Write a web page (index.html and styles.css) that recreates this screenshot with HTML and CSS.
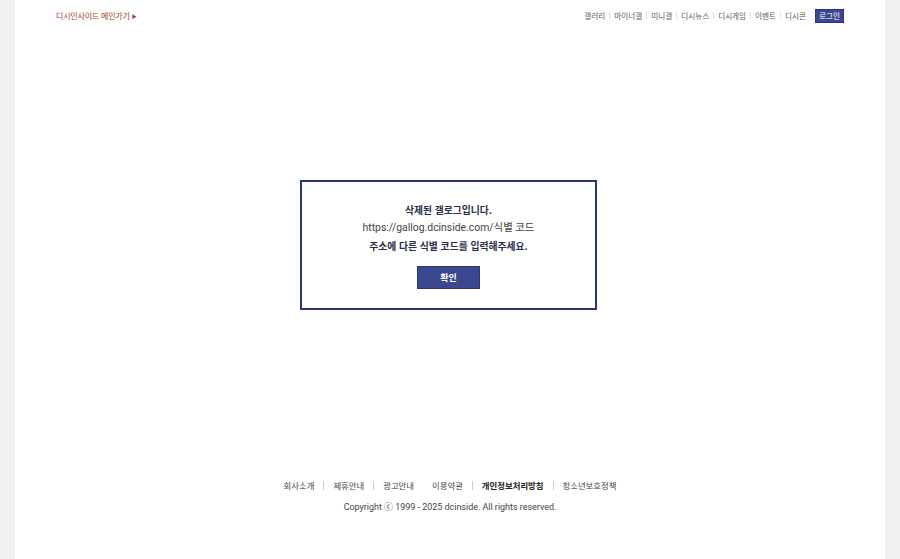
FILE: index.html
```html
<!DOCTYPE html>
<html lang="ko">
<head>
<meta charset="utf-8">
<title>갤로그</title>
<link rel="stylesheet" href="styles.css">
</head>
<body>
<div class="wrap">
  <header class="top">
    <a class="home-link" href="#">디시인사이드 메인가기 <span class="tri">&#9654;</span></a>
    <nav class="gnb">
      <a href="#">갤러리</a><span class="bar"></span>
      <a href="#">마이너갤</a><span class="bar"></span>
      <a href="#">미니갤</a><span class="bar"></span>
      <a href="#">디시뉴스</a><span class="bar"></span>
      <a href="#">디시게임</a><span class="bar"></span>
      <a href="#">이벤트</a><span class="bar"></span>
      <a href="#">디시콘</a>
      <a class="login" href="#">로그인</a>
    </nav>
  </header>
  <main class="main">
    <div class="notice">
      <p class="strong">삭제된 갤로그입니다.</p>
      <p class="url">https://gallog.dcinside.com/식별 코드</p>
      <p class="strong">주소에 다른 식별 코드를 입력해주세요.</p>
      <button class="ok" type="button">확인</button>
    </div>
  </main>
  <footer class="foot">
    <nav class="flinks">
      <a href="#">회사소개</a><span class="fbar"></span>
      <a href="#">제휴안내</a><span class="fbar"></span>
      <a href="#">광고안내</a><span class="fgap"></span>
      <a href="#">이용약관</a><span class="fbar"></span>
      <a class="b" href="#">개인정보처리방침</a><span class="fbar"></span>
      <a href="#">청소년보호정책</a>
    </nav>
    <p class="copy">Copyright ⓒ 1999 - 2025 dcinside. All rights reserved.</p>
  </footer>
</div>
</body>
</html>
```

FILE: styles.css
```css
html, body {
  margin: 0;
  padding: 0;
}
body {
  background: #f1f1f1;
  font-family: Roboto, "Noto Sans CJK KR", sans-serif;
  color: #333;
}
a {
  text-decoration: none;
  color: inherit;
}
.wrap {
  width: 870px;
  margin: 0 auto;
  background: #fff;
  min-height: 559px;
  display: flex;
  flex-direction: column;
}
.top {
  height: 31px;
  padding: 0 41px;
  display: flex;
  align-items: center;
  justify-content: space-between;
}
.home-link {
  font-family: "Noto Sans CJK KR", sans-serif;
  font-size: 8px;
  color: #a3402e;
  letter-spacing: -0.2px;
}
.tri {
  font-size: 5px;
  vertical-align: 1px;
}
.gnb {
  display: flex;
  align-items: center;
  font-family: "Noto Sans CJK KR", sans-serif;
  font-size: 7.6px;
  color: #5e5e5e;
}
.bar {
  width: 1px;
  height: 7px;
  background: #e0e0e0;
  margin: 0 4px;
}
.login {
  margin-left: 9px;
  background: #3b4890;
  color: #fff;
  padding: 0 3px;
  height: 12px;
  line-height: 12px;
  border: 1px solid #29367c;
}
.main {
  flex: 1;
  display: flex;
  justify-content: center;
  align-items: flex-start;
  padding-top: 149px;
  padding-right: 3px;
}
.notice {
  width: 293px;
  height: 126px;
  border: 2px solid #29367c;
  display: flex;
  flex-direction: column;
  align-items: center;
}
.notice p {
  margin: 0;
  line-height: 18px;
}
.notice p:first-child {
  margin-top: 19px;
}
.strong {
  font-family: "Noto Sans CJK KR", sans-serif;
  font-weight: 700;
  font-size: 9.8px;
  color: #2a2d4a;
}
.url {
  font-size: 10.4px;
  color: #444;
}
.ok {
  margin-top: 11px;
  width: 63px;
  height: 23px;
  background: #3b4890;
  border: 1px solid #29367c;
  color: #fff;
  font-family: "Noto Sans CJK KR", sans-serif;
  font-weight: 700;
  font-size: 9px;
  padding: 0;
}
.foot {
  padding-bottom: 46px;
  display: flex;
  flex-direction: column;
  align-items: center;
}
.flinks {
  display: flex;
  align-items: center;
  font-family: "Noto Sans CJK KR", sans-serif;
  font-size: 8.4px;
  color: #444;
}
.flinks .b {
  font-weight: 700;
  color: #222;
}
.fbar {
  width: 1px;
  height: 9px;
  background: #ccc;
  margin: 0 9px;
}
.fgap {
  width: 18px;
}
.copy {
  margin: 9px 0 0;
  font-size: 8.95px;
  color: #444;
}
```
